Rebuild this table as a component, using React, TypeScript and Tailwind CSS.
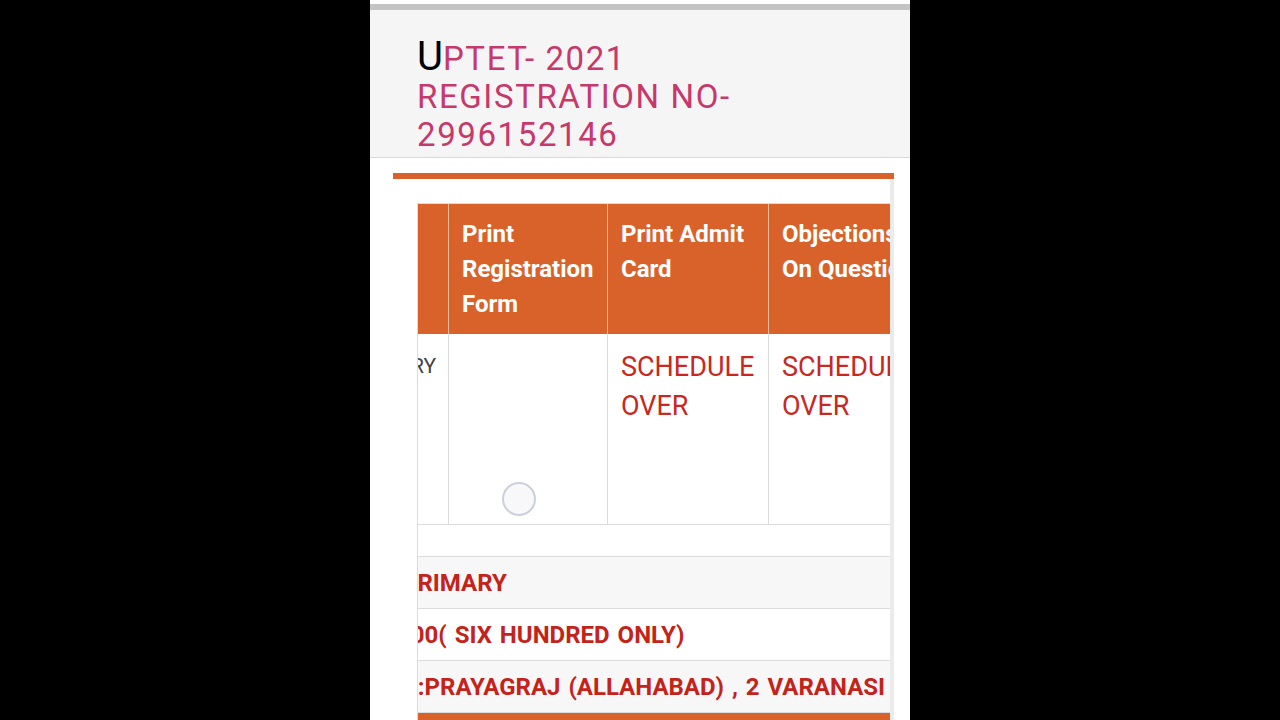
import React from "react";

const headCells = [
  { w: "w-[159px]", lines: ["Print", "Registration", "Form"] },
  { w: "w-[161px]", lines: ["Print Admit", "Card"] },
  { w: "w-[140px]", lines: ["Objections", "On Questions"] },
];

const infoRows = [
  { text: "PRIMARY", shift: "ml-[-16px]", bg: "bg-[#f7f7f7]" },
  { text: "600( SIX HUNDRED ONLY)", shift: "ml-[-21px]", bg: "bg-white" },
  {
    text: "1:PRAYAGRAJ (ALLAHABAD) , 2 VARANASI , 3 LUCKNOW",
    shift: "ml-[-14px]",
    bg: "bg-[#f7f7f7]",
  },
];

const App = () => {
  return (
    <div className="w-full h-screen bg-black flex justify-center overflow-hidden font-['Roboto',sans-serif]">
      <div className="w-[540px] h-full bg-white flex flex-col">
        {/* top strip */}
        <div className="h-[4px] shrink-0 bg-white" />
        <div className="h-[6px] shrink-0 bg-[#c4c4c4]" />

        {/* title */}
        <div className="shrink-0 bg-[#f5f5f5] border-b border-[#d9d9d9] pl-[47px] pt-[28px] h-[148px]">
          <p className="text-[33px] leading-[38px] tracking-[1.6px] text-[#c7386b]">
            <span className="text-[40px] text-black tracking-normal">U</span>PTET- 2021
            <br />
            REGISTRATION NO-
            <br />
            2996152146
          </p>
        </div>

        {/* panel */}
        <div className="shrink-0 ml-[23px] w-[501px] mt-[15px] h-[6px] bg-[#d9622b]" />
        <div className="ml-[23px] w-[501px] flex-1 overflow-hidden pl-[24px] pt-[24px] border-r-[4px] border-[#ebebeb]">
          <div className="w-[473px] border-l border-t border-[#dcdcdc] overflow-hidden">
            {/* header row */}
            <div className="flex h-[130px] bg-[#d9622b] text-white font-bold text-[24px] leading-[35px]">
              <div className="w-[31px] shrink-0 border-r border-[#f2bb9c]" />
              {headCells.map((c, i) => (
                <div
                  key={i}
                  className={`${c.w} shrink-0 pl-[13px] pt-[13px] whitespace-nowrap overflow-hidden ${
                    i < headCells.length - 1 ? "border-r border-[#f2bb9c]" : ""
                  }`}
                >
                  {c.lines.map((l) => (
                    <div key={l}>{l}</div>
                  ))}
                </div>
              ))}
            </div>

            {/* body row */}
            <div className="flex h-[191px] border-b border-[#dcdcdc]">
              <div className="w-[31px] shrink-0 border-r border-[#dcdcdc] overflow-hidden flex justify-end pr-[12px] pt-[18px]">
                <span className="whitespace-nowrap text-[21px] leading-[28px] text-[#444]">PRIMARY</span>
              </div>
              <div className="w-[159px] shrink-0 border-r border-[#dcdcdc] relative">
                <div className="absolute left-[53px] top-[148px] w-[34px] h-[34px] rounded-full border-2 border-[#ccd0dc] bg-[#f8f8fa]" />
              </div>
              <div className="w-[161px] shrink-0 border-r border-[#dcdcdc] pl-[13px] pt-[14px] text-[27px] leading-[39px] text-[#c8281e]">
                SCHEDULE
                <br />
                OVER
              </div>
              <div className="w-[140px] shrink-0 pl-[13px] pt-[14px] text-[27px] leading-[39px] text-[#c8281e] whitespace-nowrap overflow-hidden">
                SCHEDULE
                <br />
                OVER
              </div>
            </div>

            <div className="h-[32px] border-b border-[#dcdcdc]" />

            {infoRows.map((r) => (
              <div
                key={r.text}
                className={`h-[52px] border-b border-[#dcdcdc] flex items-center overflow-hidden ${r.bg}`}
              >
                <span
                  className={`${r.shift} whitespace-nowrap font-bold text-[24px] [word-spacing:2px] text-[#c4231a]`}
                >
                  {r.text}
                </span>
              </div>
            ))}
            <div className="h-[40px] bg-[#d9622b]" />
          </div>
        </div>
      </div>
    </div>
  );
};

export default App;
